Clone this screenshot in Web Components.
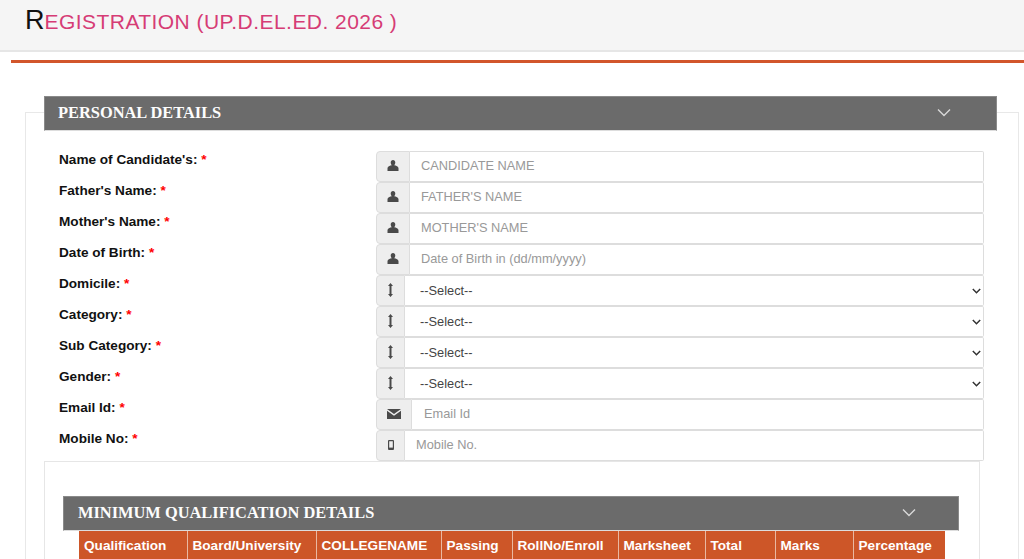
<!DOCTYPE html>
<html lang="en"><head><meta charset="utf-8"><title>Registration</title>
<style>
html,body{margin:0;padding:0;height:559px;overflow:hidden;background:#fff;font-family:"Liberation Sans",Arial,sans-serif}
reg-page{display:block}
</style></head><body>
<reg-page>
  <reg-title>Registration (UP.D.EL.ED. 2026 )</reg-title>
  <reg-panel>
    <reg-heading>PERSONAL DETAILS</reg-heading>
    <reg-field label="Name of Candidate's:" icon="user" addon="34" placeholder="CANDIDATE NAME"></reg-field>
    <reg-field label="Father's Name:" icon="user" addon="34" placeholder="FATHER'S NAME"></reg-field>
    <reg-field label="Mother's Name:" icon="user" addon="34" placeholder="MOTHER'S NAME"></reg-field>
    <reg-field label="Date of Birth:" icon="user" addon="34" placeholder="Date of Birth in (dd/mm/yyyy)"></reg-field>
    <reg-field label="Domicile:" icon="resize" addon="29" select></reg-field>
    <reg-field label="Category:" icon="resize" addon="29" select></reg-field>
    <reg-field label="Sub Category:" icon="resize" addon="29" select></reg-field>
    <reg-field label="Gender:" icon="resize" addon="29" select></reg-field>
    <reg-field label="Email Id:" icon="mail" addon="36" placeholder="Email Id" pad="12"></reg-field>
    <reg-field label="Mobile No:" icon="phone" addon="29" placeholder="Mobile No."></reg-field>
    <reg-subpanel>
      <reg-heading>MINIMUM QUALIFICATION DETAILS</reg-heading>
      <reg-table></reg-table>
    </reg-subpanel>
  </reg-panel>
</reg-page>
<script>
function shadow(el, html){ el.attachShadow({mode:'open'}).innerHTML = html; }
customElements.define('reg-title', class extends HTMLElement{ constructor(){ super(); shadow(this, `<style>
:host{display:block;box-sizing:border-box;height:52px;background:#f5f5f5;border-bottom:2px solid #e6e6e6;padding:4px 0 0 25px}
h1{margin:0;font:400 21px/32px "Liberation Sans",Arial,sans-serif;letter-spacing:.45px;color:#d63c75;text-transform:uppercase}
h1::first-letter{font-size:27px;color:#111;letter-spacing:0}
</style><h1><slot></slot></h1>`);} });
customElements.define('reg-panel', class extends HTMLElement{ constructor(){ super(); shadow(this, `<style>
:host{display:block;margin:8px 0 0 11px;border-top:3px solid #d2562b;padding:49px 0 0 14px}
.box{box-sizing:border-box;width:994px;height:460px;border:1px solid #e8e8e8;border-bottom:0;padding:0 0 0 18px}
.rows{display:block;margin-top:-17px}
</style><div class="box"><div class="rows"><slot></slot></div></div>`);} });
customElements.define('reg-heading', class extends HTMLElement{ constructor(){ super(); shadow(this, `<style>
:host{display:flex;align-items:center;justify-content:space-between;box-sizing:border-box;height:35px;width:953px;margin-bottom:20px;background:#6b6b6b;border:1px solid #8a8a8a;border-bottom-color:#ddd;padding:0 45px 2px 13px;color:#fdfdfd;font:700 16.4px "Liberation Serif","Times New Roman",serif}
svg{display:block;width:14px;height:9px}
</style><span><slot></slot></span><svg viewBox="0 0 14 9" fill="none" stroke="#d8d8d8" stroke-width="1.4"><path d="M1 1.5l6 6 6-6"/></svg>`);} });
const ICONS = {
 user:`<svg width="12" height="11" viewBox="0 0 12 11"><path fill="#4a4a4a" d="M6 0C7.400 0 8.300 1.100 8.300 2.600 8.300 3.800 7.800 4.700 7.200 5.200 9 5.600 11.500 6.200 11.500 8.200V11H.5V8.200C.5 6.200 3 5.600 4.800 5.200 4.200 4.700 3.700 3.800 3.700 2.600 3.700 1.100 4.600 0 6 0z"/></svg>`,
 resize:`<svg width="5" height="14" viewBox="0 0 5 14"><path fill="#4a4a4a" d="M2.500 0L5 3H3.500V11H5L2.500 14L0 11H1.500V3H0z"/></svg>`,
 mail:`<svg width="14" height="10" viewBox="0 0 14 10"><path fill="#4a4a4a" d="M0 0H14L7 5zM0 1.800L7 6.800 14 1.800V10H0z"/></svg>`,
 phone:`<svg width="6" height="10" viewBox="0 0 6 10"><path fill="none" stroke="#4a4a4a" stroke-width="1.200" d="M1 .6H5Q5.400.6 5.400 1V9Q5.400 9.400 5 9.400H1Q.6 9.400.6 9V1Q.6.6 1 .6z"/><path fill="#4a4a4a" d="M1 7.600H5V9.400H1z"/></svg>`
};
const CHEV = "url(\"data:image/svg+xml,%3Csvg xmlns='http://www.w3.org/2000/svg' width='9' height='6' viewBox='0 0 9 6'%3E%3Cpath d='M.8 1l3.700 3.700L8.200 1' fill='none' stroke='%23333' stroke-width='1.500'/%3E%3C/svg%3E\")";
customElements.define('reg-field', class extends HTMLElement{ constructor(){ super();
 const L=this.getAttribute('label'), ic=this.getAttribute('icon'), w=this.getAttribute('addon');
 const pad=+(this.getAttribute('pad')||'11'), ph=this.getAttribute('placeholder')||'';
 const ctl=this.hasAttribute('select')
  ? `<select><option>--Select--</option></select>`
  : `<input type="text" placeholder="${ph.replace(/"/g,'&quot;')}" style="padding-left:${pad}px">`;
 shadow(this, `<style>
:host{display:grid;grid-template-columns:332px 608px;height:31px}
label{font:700 13.6px/16px "Liberation Sans",Arial,sans-serif;color:#111;padding:1px 0 0 15px}
i{font-style:normal;color:#f00}
.group{display:flex;height:31px;box-sizing:border-box}
.addon{flex:none;box-sizing:border-box;width:${w}px;display:flex;align-items:center;justify-content:center;padding-bottom:2px;background:#eee;border:1px solid #ddd;border-radius:4px 0 0 4px}
input,select{flex:1;min-width:0;box-sizing:border-box;height:31px;border:1px solid #ddd;border-left:0;background:#fff;font:12.8px "Liberation Sans",Arial,sans-serif;color:#444;outline:0;margin:0;border-radius:0 2px 2px 0}
input{padding:0 11px 3px}
input::placeholder{color:#999;opacity:1}
select{appearance:none;-webkit-appearance:none;padding:0 0 1px 15px;background:#fff ${CHEV} no-repeat right 2px top 12px}
</style><label>${L} <i>*</i></label><div class="group"><span class="addon">${ICONS[ic]}</span>${ctl}</div>`);
}});
customElements.define('reg-subpanel', class extends HTMLElement{ constructor(){ super(); shadow(this, `<style>
:host{display:block;box-sizing:border-box;width:936px;height:120px;border:1px solid #e6e6e6;border-bottom:0;padding:34px 0 0 18px}
::slotted(reg-heading){width:896px;margin-bottom:0;padding-left:14px;padding-right:42px}
</style><slot></slot>`);} });
customElements.define('reg-table', class extends HTMLElement{ constructor(){ super();
 const cols=[['Qualification',108],['Board/University',129],['COLLEGENAME',125],['Passing',71],['RollNo/Enroll',106],['Marksheet',87],['Total',70],['Marks',78],['Percentage',92]];
 shadow(this, `<style>
:host{display:block;margin:0 0 0 16px}
table{border-collapse:collapse;table-layout:fixed;width:866px}
th{box-sizing:border-box;height:30px;padding:0 0 2px 5px;background:#cd5628;color:#fff;font:700 13.6px "Liberation Sans",Arial,sans-serif;text-align:left;border-left:1px solid #e9b8a2;white-space:nowrap}
th:first-child{border-left:0}
</style><table><colgroup>${cols.map(c=>`<col style="width:${c[1]}px">`).join('')}</colgroup><tr>${cols.map(c=>`<th>${c[0]}</th>`).join('')}</tr></table>`);
}});
</script>
</body></html>
